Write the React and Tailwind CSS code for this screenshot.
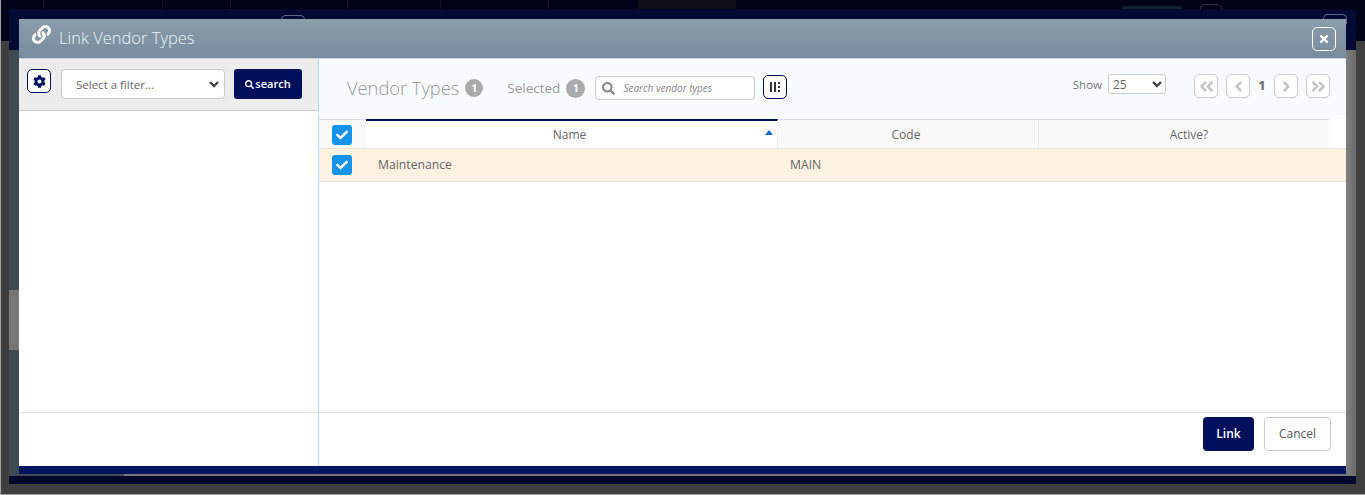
import { FaLink, FaCog, FaSearch, FaTimes, FaAngleDoubleLeft, FaAngleLeft, FaAngleRight, FaAngleDoubleRight, FaCheck } from "react-icons/fa";

const SEPARATORS = [43, 162, 230, 347, 440, 548];

function PageButton({ children }) {
  return (
    <button className="w-6 h-6 flex items-center justify-center rounded-[5px] border border-[#ccc] bg-white text-[#c4c4c4] text-[17px]">
      {children}
    </button>
  );
}

function Tick() {
  return (
    <span className="w-5 h-5 rounded-[3px] bg-[#1593ea] flex items-center justify-center text-white text-[12px]">
      <FaCheck />
    </span>
  );
}

function ChevronDownMark() {
  return (
    <svg className="ml-auto" width="12" height="12" viewBox="0 0 12 12" fill="none" stroke="#444" strokeWidth="2.4">
      <path d="M2 4l4 4 4-4" />
    </svg>
  );
}

export default function App() {
  return (
    <div className="relative h-[495px] w-[1365px] overflow-hidden bg-[#3f3f3f] font-['Open_Sans',sans-serif] text-[12px] text-[#666]">
      {/* Page behind the modal */}
      <div className="h-[41px] bg-[#000318] relative">
        {SEPARATORS.map((x) => (
          <span key={x} className="absolute top-0 h-[9px] w-px bg-[#12151f]" style={{ left: x }} />
        ))}
        <span className="absolute left-[638px] top-0 w-[98px] h-[9px] bg-[#0d1117]" />
        <span className="absolute left-[1122px] top-[6px] w-[60px] h-[3px] rounded-t-[4px] bg-[#0b2430]" />
        <span className="absolute left-[1200px] top-[4px] w-[22px] h-[5px] rounded-t-full border border-b-0 border-[#28303c]" />
      </div>
      <div className="absolute left-0 top-0 bottom-0 w-px bg-[#a0a0a0]" />
      <div className="absolute left-0 right-0 bottom-0 h-px bg-[#a0a0a0]" />

      {/* Modal */}
      <div className="absolute left-[9px] top-[9px] w-[1347px] h-[475px] bg-[#000a33] pt-[10px] flex flex-col">
        <span className="absolute left-[272px] top-[6px] w-[24px] h-[10px] rounded-t-[5px] border border-b-0 border-[#5f6880]" />
        <span className="absolute left-[1314px] top-[5px] w-[24px] h-[10px] rounded-t-[5px] border border-b-0 border-[#5f6880]" />
        <div className="flex flex-1 min-h-0">
          <div className="w-[10px] mt-[31px] bg-[#3f4a52] flex flex-col">
            <div className="h-[240px]" />
            <div className="h-[60px] bg-[#777]" />
          </div>

          <div className="relative flex-1 flex flex-col min-w-0">
            {/* Title bar */}
            <div className="h-[40px] bg-gradient-to-b from-[#8b9cab] to-[#788c9e] flex items-center pl-[13px] pr-[10px] text-white border-b border-[#ccd3d9]">
              <FaLink className="text-[19px] -mt-[8px]" />
              <span className="ml-[8px] -mt-px text-[16.5px] font-light text-[#e8f6ff]">Link Vendor Types</span>
              <button className="ml-auto w-6 h-6 rounded-[5px] border border-white flex items-center justify-center text-[12px]">
                <FaTimes />
              </button>
            </div>

            <div className="flex-1 flex bg-white min-h-0">
              {/* Filters */}
              <div className="w-[300px] shrink-0 border-r border-[#b3dcff] flex flex-col">
                <div className="h-[52px] bg-[#ececec] border-b border-[#ccc] flex items-start pt-[10px] pl-[8px] pr-[16px]">
                  <button className="w-6 h-6 rounded-[5px] border border-[#000f5c] bg-white flex items-center justify-center text-[#000f5c] text-[13px]">
                    <FaCog />
                  </button>
                  <div className="ml-[10px] w-[164px] h-[30px] bg-white border border-[#ccc] rounded-[4px] flex items-center pl-[14px] pr-[4px] text-[11.5px]">
                    <span className="pt-px">Select a filter...</span>
                    <ChevronDownMark />
                  </div>
                  <button className="ml-[9px] w-[68px] h-[30px] rounded-[3px] bg-[#000f5c] text-white text-[11px] font-semibold flex items-center justify-center">
                    <FaSearch className="text-[9px]" />
                    <span className="ml-px pt-px">search</span>
                  </button>
                </div>
                <div className="flex-1" />
                <div className="h-[54px] border-t border-[#e3e3e3]" />
              </div>

              {/* Results */}
              <div className="flex-1 min-w-0 flex flex-col">
                <div className="h-[60px] bg-[#f8fcff] flex items-center pb-[2px] pl-[28px] pr-[16px]">
                  <span className="text-[18.3px] font-light text-[#999]">Vendor Types</span>
                  <span className="ml-[6px] w-[18px] h-[18px] rounded-full bg-[#aaa] text-white text-[10px] font-bold flex items-center justify-center">1</span>
                  <span className="ml-[24px] text-[13.5px] text-[#999]">Selected</span>
                  <span className="ml-[6px] w-[19px] h-[19px] rounded-full bg-[#aaa] text-white text-[10px] font-bold flex items-center justify-center">1</span>
                  <div className="ml-[10px] w-[160px] h-[24px] bg-white border border-[#ccc] rounded-[4px] flex items-center pl-[6px]">
                    <FaSearch className="text-[13px] text-[#888]" />
                    <span className="ml-[8px] italic text-[10px] text-[#888]">Search vendor types</span>
                  </div>
                  <button className="ml-[8px] -mt-[2px] w-6 h-6 rounded-[5px] border border-[#000f5c] bg-white flex items-center justify-center gap-[2px]">
                    <span className="w-[2px] h-[10px] bg-[#333]" />
                    <span className="w-[2px] h-[10px] bg-[#333]" />
                    <span className="flex flex-col gap-[2px]">
                      <span className="w-[2px] h-[2px] bg-[#333]" />
                      <span className="w-[2px] h-[2px] bg-[#333]" />
                      <span className="w-[2px] h-[2px] bg-[#333]" />
                    </span>
                  </button>
                  <span className="ml-auto -mt-[6px] text-[11.5px] text-[#777]">Show</span>
                  <div className="ml-[6px] -mt-[8px] w-[58px] h-[20px] bg-white border border-[#ccc] rounded-[3px] flex items-center pl-[4px] pr-[2px]">
                    <span className="pt-px">25</span>
                    <ChevronDownMark />
                  </div>
                  <div className="ml-[28px] -mt-[4px] flex items-center">
                    <PageButton><FaAngleDoubleLeft /></PageButton>
                    <span className="ml-[8px]"><PageButton><FaAngleLeft /></PageButton></span>
                    <span className="w-[24px] text-center text-[13px] font-bold text-[#666]">1</span>
                    <PageButton><FaAngleRight /></PageButton>
                    <span className="ml-[8px]"><PageButton><FaAngleDoubleRight /></PageButton></span>
                  </div>
                </div>

                {/* Table head */}
                <div className="h-[29px] flex mr-[17px] border-t border-[#ddd]">
                  <div className="w-[47px] bg-[#f9f9f9] flex items-center justify-center pr-px pt-px"><Tick /></div>
                  <div className="w-[412px] bg-white border-t-2 border-t-[#000f5c] -mt-px relative flex items-center justify-center border-r border-[#eee] pr-[4px]">
                    Name
                    <span className="absolute right-[4px] top-[9px] w-0 h-0 border-x-[4px] border-x-transparent border-b-[5px] border-b-[#0b6fd6]" />
                  </div>
                  <div className="w-[261px] bg-[#f9f9f9] flex items-center justify-center border-r border-[#eee] pr-[4px] pt-px">Code</div>
                  <div className="flex-1 bg-[#f9f9f9] flex items-center justify-center pl-[10px] pt-px">Active?</div>
                </div>
                {/* Row */}
                <div className="h-[34px] flex items-center bg-[#fdf2e1] border-y border-[#e8e8e8] text-[12.2px]">
                  <div className="w-[46px] flex items-center justify-center"><Tick /></div>
                  <div className="w-[412px] pl-[13px] pt-px">Maintenance</div>
                  <div className="pl-[13px] pt-px">MAIN</div>
                </div>
                <div className="flex-1" />
                <div className="h-[54px] border-t border-[#e3e3e3] flex items-start justify-end gap-[10px] pr-[15px] pt-[4px]">
                  <button className="w-[51px] h-[34px] rounded-[4px] bg-[#000f5c] text-white font-semibold">Link</button>
                  <button className="w-[67px] h-[34px] rounded-[4px] border border-[#ccc] bg-white text-[#555]">Cancel</button>
                </div>
              </div>
            </div>
            <div className="h-[8px] bg-[#00145f]" />
          </div>

          <div className="w-[10px] mt-[31px] bg-gradient-to-r from-[#808080] to-[#6a6a6a]" />
        </div>
        <div className="h-[2px] flex">
          <div className="w-[115px] bg-[#3f4a52]" />
          <div className="flex-1 bg-[#777]" />
        </div>
        <div className="h-[8px] bg-[#00072b]" />
      </div>
    </div>
  );
}
